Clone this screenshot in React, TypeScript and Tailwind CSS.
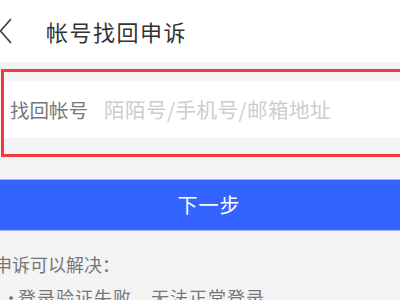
export default function App() {
  return (
    <div
      className="w-[400px] h-[300px] overflow-hidden bg-[#f4f4f4]"
      style={{ fontFamily: '"Noto Sans CJK SC", "Noto Sans", sans-serif' }}
    >
      {/* 顶部导航 */}
      <div className="h-[62px] bg-white flex items-center relative">
        <svg width="14" height="26" viewBox="0 0 14 26" className="ml-[-1px]">
          <path d="M12 1 L1.5 13 L12 25" fill="none" stroke="#444" strokeWidth="1.8" />
        </svg>
        <span className="ml-[33px] text-[22px] text-[#333] tracking-[1.5px] leading-none">帐号找回申诉</span>
      </div>

      {/* 输入框 */}
      <div className="pt-[7px]">
        <div className="ml-[1px] w-[420px] border-[3px] border-[#f23a3e] pt-[9px] pb-[16px] bg-[#f5f5f5]">
          <div className="h-[57px] bg-white flex items-center">
            <span className="ml-[6px] text-[19.5px] text-[#777] leading-none">找回帐号</span>
            <span className="ml-[16px] text-[20.5px] text-[#cdcdcd] leading-none tracking-[0.5px]">陌陌号/手机号/邮箱地址</span>
          </div>
        </div>
      </div>

      {/* 按钮 */}
      <div className="mt-[22px] h-[52px] bg-[#3464ff] border-y border-[#9fb6ff] flex items-center justify-center">
        <span className="ml-[18px] text-[20px] text-white leading-none tracking-[1px]">下一步</span>
      </div>

      {/* 说明 */}
      <div className="pt-[20px] text-[18px] text-[#777] leading-[26px]">
        <div className="ml-[-6px]">申诉可以解决：</div>
        <div className="flex items-center mt-[7px]">
          <span className="ml-[2px] w-[16px]">•</span>
          <span className="tracking-[1px]">登录验证失败，无法正常登录</span>
        </div>
      </div>
    </div>
  );
}
